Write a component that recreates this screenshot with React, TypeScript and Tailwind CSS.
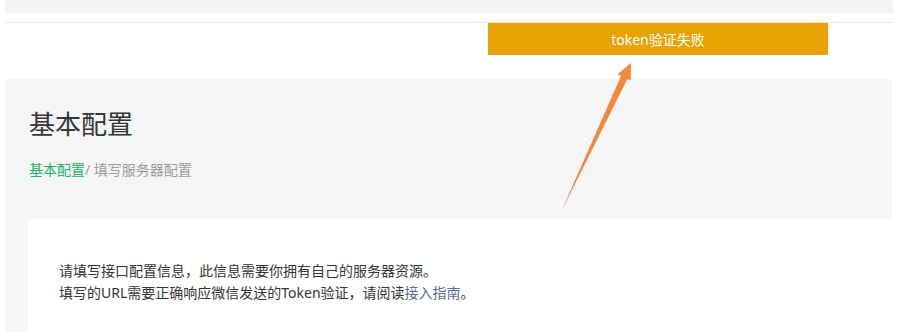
import React from 'react';

const FONT = "font-['Noto_Sans','Noto_Sans_CJK_SC',sans-serif]";

function Arrow() {
  return (
    <svg
      className="absolute left-0 top-0 pointer-events-none"
      width={898}
      height={332}
      viewBox="0 0 898 332"
    >
      <polygon
        points="631,63 617.6,74.3 621,76 561,212 627.4,79 630.8,80.6"
        fill="#f3883a"
      />
    </svg>
  );
}

export default function App() {
  return (
    <div className={`relative w-[898px] h-[332px] overflow-hidden bg-white ${FONT}`}>
      <div className="px-[5px]">
        {/* top strip */}
        <div className="h-[13px] bg-[#f4f4f4]" />
        <div className="h-[10px] border-b border-[#ebebeb]" />
        <div className="h-[56px]" />

        {/* main */}
        <div className="bg-[#f5f6f8] pl-[23px] pt-[28px] mr-px">
          <h1 className="pl-px text-[26px] leading-[34px] text-[#353535]">基本配置</h1>
          <div className="pl-px mt-[19px] text-[14px] leading-[20px]">
            <span className="text-[#1fae5b]">基本配置</span>
            <span className="text-[#9a9a9a]">/ 填写服务器配置</span>
          </div>
          <div className="mt-[39px] mr-[-6px] bg-white pl-[31px] pt-[41px] h-[120px] text-[14px] leading-[22px] text-[#353535]">
            <p>请填写接口配置信息，此信息需要你拥有自己的服务器资源。</p>
            <p>
              填写的URL需要正确响应微信发送的Token验证，请阅读
              <span className="text-[#576b95]">接入指南</span>。
            </p>
          </div>
        </div>
      </div>

      {/* toast */}
      <div className="absolute left-[488px] top-[23px] w-[340px] h-[32px] bg-[#e9a203] flex items-center justify-center text-white text-[14px]">
        token验证失败
      </div>

      <Arrow />
    </div>
  );
}
